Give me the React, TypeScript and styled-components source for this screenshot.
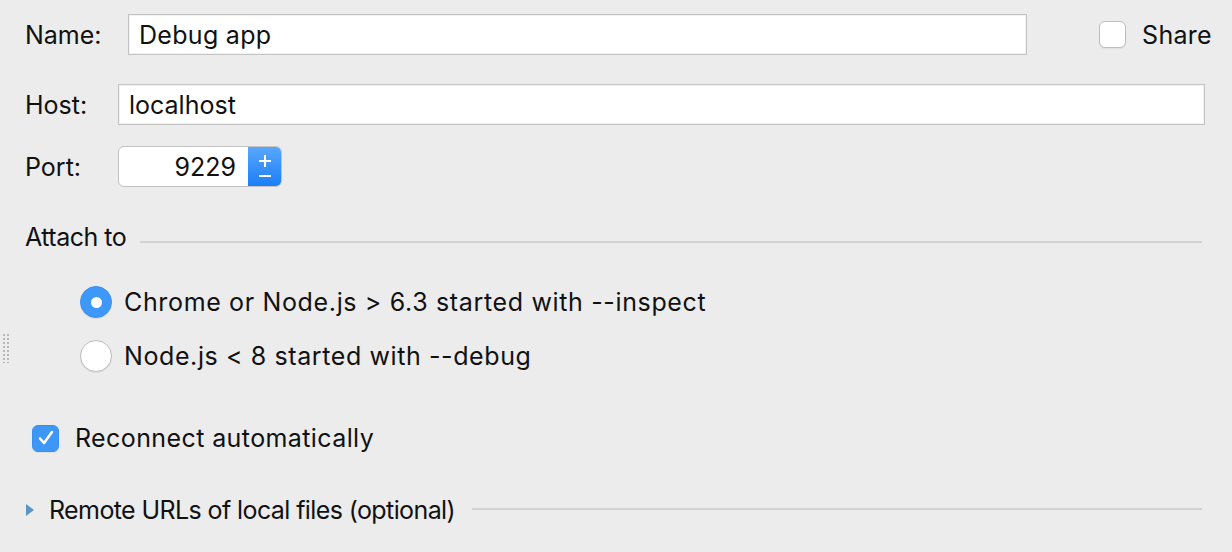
import React from 'react';
import styled, { createGlobalStyle } from 'styled-components';

const GlobalStyle = createGlobalStyle`
  html, body {
    margin: 0;
    padding: 0;
    background: #ececec;
  }
  body {
    font-family: Inter, "Liberation Sans", Arial, sans-serif;
    font-size: 25px;
    color: #111;
  }
`;

const Panel = styled.div`
  width: 1232px;
  height: 552px;
  box-sizing: border-box;
  padding: 14px 0 0 25px;
  display: flex;
  flex-direction: column;
  position: relative;
  overflow: hidden;
`;

const FieldRow = styled.div<{ $top?: number; $right: number }>`
  display: flex;
  align-items: center;
  height: 41px;
  margin-top: ${p => p.$top ?? 0}px;
  padding-right: ${p => p.$right}px;
`;

const Label = styled.label<{ $width: number }>`
  width: ${p => p.$width}px;
  flex-shrink: 0;
`;

const Text = styled.span<{ $spacing?: number }>`
  letter-spacing: ${p => p.$spacing ?? 0}px;
  white-space: nowrap;
`;

const TextField = styled.div`
  flex: 1;
  height: 41px;
  box-sizing: border-box;
  background: #fff;
  border: 1px solid #c3c3c3;
  box-shadow: inset 0 0 0 1px #f2f2f2;
  display: flex;
  align-items: center;
  padding-left: 10px;
`;

const ShareBox = styled.div`
  display: flex;
  align-items: center;
  gap: 16px;
  margin-left: 72px;
`;

const Check = styled.span<{ $checked?: boolean }>`
  width: 27px;
  height: 27px;
  box-sizing: border-box;
  border-radius: 6px;
  flex-shrink: 0;
  display: flex;
  align-items: center;
  justify-content: center;
  background: ${p => (p.$checked ? '#3d97f7' : '#fff')};
  border: 1px solid ${p => (p.$checked ? '#3a8fed' : '#bdbdbd')};
  box-shadow: 0 1px 1px rgba(0, 0, 0, 0.06);
`;

const PortField = styled.div`
  width: 164px;
  height: 41px;
  box-sizing: border-box;
  display: flex;
  border: 1px solid #c3c3c3;
  border-radius: 6px;
  overflow: hidden;
  background: #fff;
`;

const PortValue = styled.div`
  flex: 1;
  display: flex;
  align-items: center;
  justify-content: flex-end;
  padding-right: 12px;
`;

const Spinner = styled.div`
  width: 34px;
  margin: -1px -1px -1px 0;
  background: linear-gradient(#5aa8fd, #1a7df7);
  display: flex;
  flex-direction: column;
  align-items: center;
  justify-content: center;
`;

const SectionHeader = styled.div<{ $top: number }>`
  display: flex;
  align-items: center;
  gap: 14px;
  margin-top: ${p => p.$top}px;
  padding-right: 30px;
  height: 30px;
`;

const Rule = styled.div<{ $offset: number }>`
  flex: 1;
  height: 2px;
  background: #d2d2d2;
  margin-top: ${p => p.$offset}px;
`;

const RadioGroup = styled.div`
  display: flex;
  flex-direction: column;
  gap: 22px;
  margin-top: 34px;
  padding-left: 55px;
`;

const Option = styled.div`
  display: flex;
  align-items: center;
  gap: 12px;
  height: 32px;
`;

const Radio = styled.span<{ $on?: boolean }>`
  width: 32px;
  height: 32px;
  box-sizing: border-box;
  border-radius: 50%;
  display: flex;
  align-items: center;
  justify-content: center;
  background: ${p => (p.$on ? '#3d98fa' : '#fff')};
  border: 1px solid ${p => (p.$on ? '#3a90f0' : '#bdbdbd')};
  box-shadow: 0 1px 1px rgba(0, 0, 0, 0.08);
`;

const Dot = styled.span`
  width: 11px;
  height: 11px;
  border-radius: 50%;
  background: #fff;
`;

const CheckRow = styled.div`
  display: flex;
  align-items: center;
  gap: 16px;
  height: 28px;
  margin-top: 52px;
  padding-left: 7px;
`;

const Collapsible = styled.div`
  display: flex;
  align-items: center;
  height: 30px;
  margin-top: 43px;
  padding-right: 30px;
  gap: 17px;
`;

const Toggle = styled.span`
  display: flex;
  align-items: center;
`;

const Arrow = styled.span`
  width: 0;
  height: 0;
  border-top: 6.5px solid transparent;
  border-bottom: 6.5px solid transparent;
  border-left: 8px solid #5a96c4;
  margin: 0 15px 0 1px;
`;

const Grip = styled.div`
  position: absolute;
  left: 2px;
  top: 333px;
  width: 8px;
  height: 30px;
  background-image: radial-gradient(circle, #b8b8b8 1px, transparent 1.2px);
  background-size: 4px 4px;
`;

const App: React.FC = () => {
  return (
    <>
      <GlobalStyle />
      <Panel>
        <FieldRow $right={20}>
          <Label $width={103}>Name:</Label>
          <TextField>
            <Text $spacing={0.3}>Debug app</Text>
          </TextField>
          <ShareBox>
            <Check />
            <Text $spacing={0.3}>Share</Text>
          </ShareBox>
        </FieldRow>

        <FieldRow $top={29} $right={27}>
          <Label $width={93}>Host:</Label>
          <TextField>localhost</TextField>
        </FieldRow>

        <FieldRow $top={21} $right={0}>
          <Label $width={93}>Port:</Label>
          <PortField>
            <PortValue>9229</PortValue>
            <Spinner>
              <svg width="16" height="32" viewBox="0 0 16 32">
                <path d="M8 4v12M2 10h12" stroke="#fff" strokeWidth="2" />
                <path d="M2 25h12" stroke="#fff" strokeWidth="2" />
              </svg>
            </Spinner>
          </PortField>
        </FieldRow>

        <SectionHeader $top={35}>
          <Text $spacing={-0.5}>Attach to</Text>
          <Rule $offset={10} />
        </SectionHeader>

        <RadioGroup>
          <Option>
            <Radio $on>
              <Dot />
            </Radio>
            <Text $spacing={0.65}>Chrome or Node.js &gt; 6.3 started with --inspect</Text>
          </Option>
          <Option>
            <Radio />
            <Text $spacing={0.6}>Node.js &lt; 8 started with --debug</Text>
          </Option>
        </RadioGroup>

        <CheckRow>
          <Check $checked>
            <svg width="18" height="16" viewBox="0 0 18 16">
              <path d="M3 8.5l4 4.5 8-11" fill="none" stroke="#fff" strokeWidth="2.6" strokeLinecap="round" strokeLinejoin="round" />
            </svg>
          </Check>
          <Text $spacing={0.4}>Reconnect automatically</Text>
        </CheckRow>

        <Collapsible>
          <Toggle>
            <Arrow />
            <Text $spacing={-0.6}>Remote URLs of local files (optional)</Text>
          </Toggle>
          <Rule $offset={-2} />
        </Collapsible>

        <Grip />
      </Panel>
    </>
  );
};

export default App;
